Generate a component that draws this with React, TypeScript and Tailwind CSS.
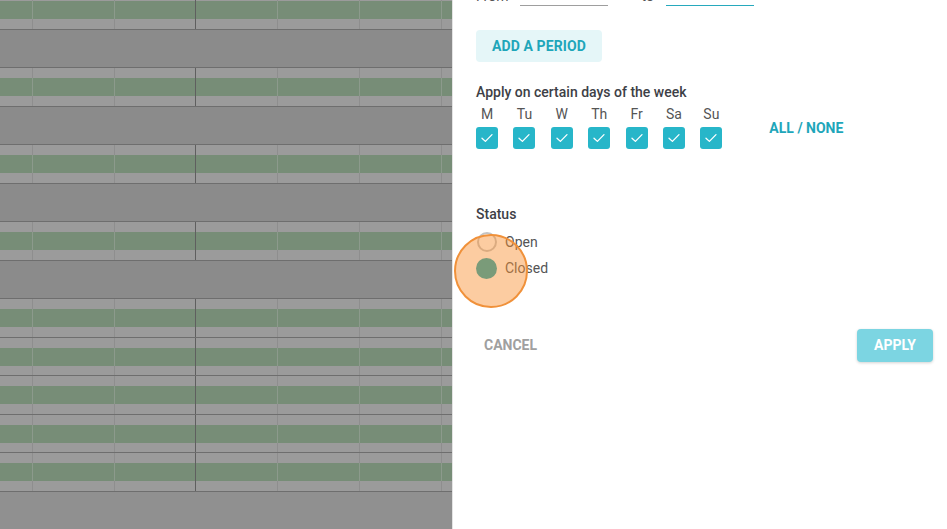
import React from "react";

const cols = [
  { w: "w-[33px]", b: "light" },
  { w: "w-[82px]", b: "light" },
  { w: "w-[81px]", b: "dark" },
  { w: "w-[82px]", b: "light" },
  { w: "w-[82px]", b: "light" },
  { w: "w-[82px]", b: "light" },
  { w: "flex-1", b: "none" },
];

function Band({ kind, h }: { kind: "light" | "green"; h: string }) {
  return (
    <div className={`flex ${h}`}>
      {cols.map((c, i) => {
        const bg = kind === "light" ? "bg-[#9b9b9b]" : "bg-[#778d77]";
        let br = "";
        if (c.b === "dark") br = "border-r border-[#5f5f5f]";
        else if (c.b === "light")
          br = kind === "light" ? "border-r border-[#8e8e8e]" : "border-r border-[#8c9a8c]";
        return <div key={i} className={`${c.w} ${bg} ${br} h-full`} />;
      })}
    </div>
  );
}

function DataRow({ h, first }: { h: 38 | 39; first?: boolean }) {
  return (
    <div className={`flex flex-col border-b border-[#6e6e6e] ${h === 39 ? "h-[39px]" : "h-[38px]"} ${first ? "-mt-[9px]" : ""}`}>
      <Band kind="light" h="h-[10px]" />
      <Band kind="green" h="h-[18px]" />
      <div className="flex-1 flex flex-col">
        <Band kind="light" h="h-full" />
      </div>
    </div>
  );
}

function HeaderRow({ h }: { h: 38 | 39 }) {
  return <div className={`bg-[#8b8b8b] border-b border-[#6e6e6e] ${h === 39 ? "h-[39px]" : "h-[38px]"}`} />;
}

function Check() {
  return (
    <div className="w-[22px] h-[22px] rounded-[3px] bg-[#27b6c9] flex items-center justify-center">
      <svg width="16" height="16" viewBox="0 0 16 16" fill="none">
        <path d="M3 8.2 L6.4 11.4 L13 4.6" stroke="white" strokeWidth="1.3" strokeLinecap="round" strokeLinejoin="round" />
      </svg>
    </div>
  );
}

export default function App() {
  const days = ["M", "Tu", "W", "Th", "Fr", "Sa", "Su"];
  return (
    <div className="w-[947px] h-[529px] flex overflow-hidden" style={{ fontFamily: "Roboto, 'Liberation Sans', sans-serif" }}>
      {/* left dimmed grid */}
      <div className="w-[452px] h-full flex flex-col overflow-hidden bg-[#8f8f8f]">
        <DataRow h={39} first />
        <HeaderRow h={38} />
        <DataRow h={39} />
        <HeaderRow h={38} />
        <DataRow h={39} />
        <HeaderRow h={38} />
        <DataRow h={39} />
        <HeaderRow h={38} />
        <DataRow h={39} />
        <DataRow h={38} />
        <DataRow h={39} />
        <DataRow h={38} />
        <DataRow h={39} />
        <div className="flex-1 bg-[#909090]" />
      </div>

      {/* right panel */}
      <div className="relative flex-1 h-full bg-white border-l border-[#e3e3e3] pl-[23px] pr-[14px] flex flex-col overflow-hidden">
        {/* From / to */}
        <div className="flex items-end h-[20px] -mt-[14px] text-[14px] text-[#555]">
          <span className="leading-[20px]">From</span>
          <div className="ml-[12px] w-[88px] border-b border-[#9e9e9e] h-[18px]" />
          <span className="ml-[33px] leading-[20px]">to</span>
          <div className="ml-[12px] w-[88px] border-b border-[#27a9bd] h-[18px]" />
        </div>

        <button className="mt-[24px] self-start h-[32px] px-[16px] rounded-[4px] bg-[#e5f6f8] text-[#1ea6ba] text-[14px] font-bold tracking-[0.1px]">
          ADD A PERIOD
        </button>

        <div className="mt-[22px] text-[14px] font-medium text-[#3d4046] leading-[17px]">Apply on certain days of the week</div>

        <div className="flex items-end">
          <div className="flex gap-[15.4px]">
            {days.map((d) => (
              <div key={d} className="flex flex-col items-center w-[22px]">
                <span className="text-[14px] text-[#555] leading-[16px] mt-[5px] mb-[5px]">{d}</span>
                <Check />
              </div>
            ))}
          </div>
          <span className="ml-[47px] mb-[13px] text-[14px] font-bold text-[#1ea6ba] leading-[16px]">ALL / NONE</span>
        </div>

        <div className="mt-[57px] text-[14px] font-medium text-[#3d4046] leading-[17px]">Status</div>

        <div className="mt-[9px] flex items-center h-[20px] text-[14px] text-[#555]">
          <div className="w-[20px] h-[20px] rounded-full border-2 border-[#c4c4c4] ml-[1px]" />
          <span className="ml-[8px]">Open</span>
        </div>
        <div className="mt-[6px] flex items-center h-[20px] text-[14px] text-[#555]">
          <div className="relative z-10 w-[21px] h-[21px] rounded-full bg-[#7a9b79]" />
          <span className="ml-[8px]">Closed</span>
        </div>

        <div className="mt-[51px] flex items-center justify-between">
          <span className="ml-[8px] text-[14px] font-bold text-[#a0a0a0]">CANCEL</span>
          <button className="w-[76px] h-[33px] rounded-[4px] bg-[#7cd5e2] text-white text-[14px] font-bold shadow-[0_1px_3px_rgba(0,0,0,0.18)]">
            APPLY
          </button>
        </div>

        {/* click indicator */}
        <div className="absolute left-[1px] top-[234px] w-[74px] h-[74px] rounded-full bg-[#f98f2e]/45 border-2 border-[#f0913a]" />
      </div>
    </div>
  );
}
